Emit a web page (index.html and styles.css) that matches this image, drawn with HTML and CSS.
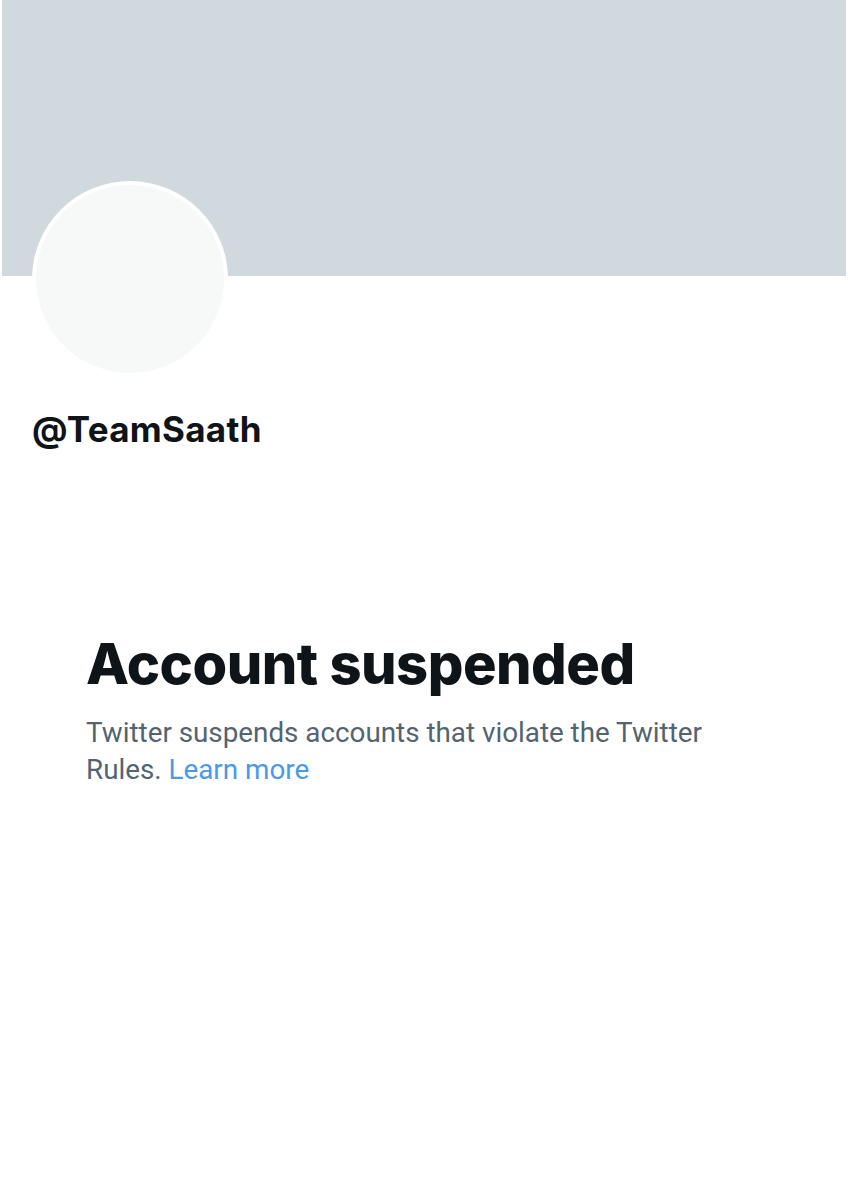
FILE: index.html
```html
<!DOCTYPE html>
<html>
<head>
<meta charset="utf-8">
<link rel="stylesheet" href="styles.css">
</head>
<body>
<div class="page">
  <div class="banner"></div>
  <div class="avatar"><div class="avatar-inner"></div></div>
  <div class="handle">@TeamSaath</div>
  <div class="notice">
    <h1 class="title">Account suspended</h1>
    <p class="desc">Twitter suspends accounts that violate the Twitter Rules. <a class="link" href="#">Learn more</a></p>
  </div>
</div>
</body>
</html>
```
FILE: styles.css
```css
html, body {
  margin: 0;
  padding: 0;
  background: #ffffff;
}
.page {
  width: 848px;
  height: 1200px;
  font-family: "Inter", "Roboto", "Liberation Sans", sans-serif;
  color: #0f1419;
}
.banner {
  margin-left: 2px;
  width: 844px;
  height: 276px;
  background: #cfd9de;
}
.avatar {
  margin-top: -95px;
  margin-left: 32px;
  width: 196px;
  height: 196px;
  border-radius: 50%;
  background: #ffffff;
  display: flex;
  align-items: center;
  justify-content: center;
}
.avatar-inner {
  width: 188px;
  height: 188px;
  border-radius: 50%;
  background: #f7f9f9;
}
.handle {
  margin-top: 30px;
  margin-left: 32px;
  font-size: 35px;
  font-weight: 700;
  line-height: 44px;
  letter-spacing: 0.3px;
}
.notice {
  margin-top: 178px;
  margin-left: 86px;
  width: 640px;
}
.title {
  margin: 0;
  font-size: 56px;
  font-weight: 800;
  line-height: 70px;
  letter-spacing: -0.5px;
}
.desc {
  margin: 15px 0 0;
  font-family: "Roboto", "Liberation Sans", sans-serif;
  font-size: 27.8px;
  line-height: 37px;
  color: #536471;
}
.link {
  color: #4a99e9;
  text-decoration: none;
}
```
